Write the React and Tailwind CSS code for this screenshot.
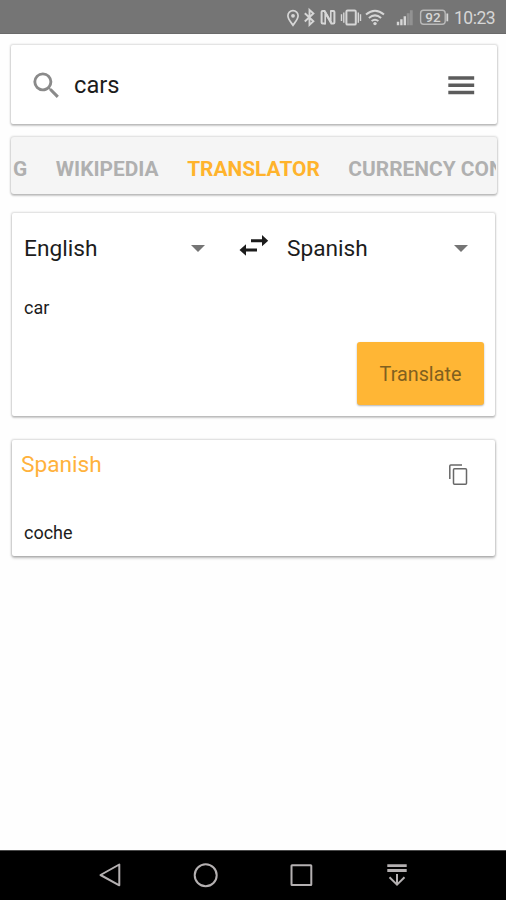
import { useState } from 'react';

const tabs = ['WIKIPEDIA', 'TRANSLATOR', 'CURRENCY CONVERTER'];

const StatusBar = () => (
  <div className="flex h-[34px] w-full items-center border-b border-[#6a6a6a] bg-[#757575] pr-[10px] pl-[286px] text-[#d6d6d6]">
    <svg className="h-[34px] w-[164px] shrink-0" viewBox="286 0 164 34" fill="none" stroke="currentColor">
      {/* location */}
      <path d="M293 25.2C291.5 22.8 287.9 19.5 287.9 15.8a5.1 5.1 0 0 1 10.2 0C298.1 19.5 294.5 22.8 293 25.2z" strokeWidth="1.7" />
      <circle cx="293" cy="15.8" r="1.9" fill="currentColor" stroke="none" />
      {/* bluetooth */}
      <path d="M304.8 13.3l8.6 8-3.9 3.6V9.9l3.9 3.6-8.6 8" strokeWidth="1.9" />
      {/* nfc */}
      <path d="M325.2 23.6h-2.6q-1 0-1-1V12.1q0-1 1-1h2l6.600 11.500" strokeWidth="2" />
      <path d="M330.800 11.100h2.600q1 0 1 1v10.500q0 1-1 1h-2l-6.600-11.500" strokeWidth="2" />
      <path d="M325.200 14v10.500M330.800 10.200v10.500" strokeWidth="1.600" />
      {/* vibrate */}
      <rect x="346.400" y="10.600" width="9.400" height="14" rx="1.200" strokeWidth="2" />
      <path d="M343.800 12.400v10.400M341.500 14.200v6.800M358.300 12.400v10.400M360.500 14.200v6.800" strokeWidth="1.400" />
      {/* wifi */}
      <path d="M366 14.600q9-7.600 18 0M368.900 17.900q6.100-5 12.200 0M371.600 21q3.400-2.600 6.800 0" strokeWidth="2" />
      <circle cx="375" cy="23.600" r="1.700" fill="currentColor" stroke="none" />
      {/* signal */}
      <path d="M398 25.300v-3.500M401.400 25.300v-6M404.800 25.300v-9" strokeWidth="2.400" />
      <path d="M408.200 25.300v-12M411.300 25.300v-15" strokeWidth="2.800" opacity="0.300" />
      {/* battery */}
      <rect x="420.600" y="10.300" width="24.600" height="14" rx="3" strokeWidth="1.400" opacity="0.700" />
      <path d="M447.300 13.500v7.800" strokeWidth="1.800" />
      <text x="433" y="22" textAnchor="middle" fontSize="13.500" fontWeight="500" fill="currentColor" stroke="none">92</text>
    </svg>
    <span className="ml-[4px] pt-[3px] text-[17.5px] tracking-[-0.5px] whitespace-nowrap">10:23</span>
  </div>
);

const SearchBar = ({ value, onChange }) => (
  <div className="flex h-[79px] items-center rounded-[2px] bg-white pt-px pr-[19px] pl-[18px] shadow-[0_0_2px_1px_rgba(0,0,0,0.14),0_2px_2px_rgba(0,0,0,0.18)]">
    <svg className="size-[35px] shrink-0" viewBox="0 0 24 24" fill="#8a8a8a">
      <path d="M15.5 14h-.79l-.28-.27A6.471 6.471 0 0 0 16 9.5 6.5 6.5 0 1 0 9.5 16c1.61 0 3.09-.59 4.23-1.57l.27.28v.79l5 4.99L20.49 19l-4.99-5zm-6 0C7.01 14 5 11.99 5 9.5S7.01 5 9.5 5 14 7.01 14 9.5 11.99 14 9.5 14z" />
    </svg>
    <input
      type="text"
      value={value}
      onChange={(e) => onChange(e.target.value)}
      className="ml-[10px] min-w-0 flex-1 pt-[2px] text-[23.7px] text-[#1c1c1c] outline-none"
    />
    <svg className="size-[34.5px] shrink-0" viewBox="0 0 24 24" fill="#5c5c5c">
      <path d="M3 18.2h18v-2.3H3v2.3zm0-5.05h18v-2.3H3v2.3zm0-7.35v2.3h18V5.8H3z" />
    </svg>
  </div>
);

const LanguageSelect = ({ label, className }) => (
  <button type="button" className={`flex items-center justify-between text-[22.7px] text-[#1c1c1c] ${className}`}>
    <span className="pt-px">{label}</span>
    <svg className="h-[7px] w-[14px]" viewBox="0 0 14 7" fill="#757575">
      <path d="M0 0h14L7 7z" />
    </svg>
  </button>
);

const NavBar = () => (
  <div className="flex h-[50px] items-center justify-center border-t border-[#4a4a4a] bg-black pl-[14px]">
    <svg className="h-[49px] w-[360px]" viewBox="80 851 360 49" fill="none" stroke="#b4b0b1" strokeWidth="2">
      <path d="M119.3 864.5v20.8L100.5 875z" strokeLinejoin="round" />
      <circle cx="205.7" cy="875.2" r="11" />
      <rect x="291.5" y="865.3" width="19.8" height="19.6" rx="0.5" />
      <path d="M387.3 865.6h19.4M387.3 870.5h19.4" strokeWidth="2.8" />
      <path d="M397 874v11M389.5 877.3l7.5 7.4 7.5-7.4" />
    </svg>
  </div>
);

const App = () => {
  const [query, setQuery] = useState('cars');
  const [text, setText] = useState('car');
  const [activeTab, setActiveTab] = useState('TRANSLATOR');

  return (
    <div className="flex h-[900px] w-[506px] flex-col overflow-hidden bg-[#fefefe] font-[Roboto,sans-serif]">
      <StatusBar />
      <main className="flex flex-1 flex-col pt-[11px]">
        <div className="mr-[9px] ml-[11px]">
          <SearchBar value={query} onChange={setQuery} />
        </div>

        <nav className="mt-[13px] mr-[9px] ml-[11px] flex h-[57px] items-center gap-[28.5px] overflow-hidden rounded-[3px] border-r border-[#f5f5f5] bg-[#f5f5f5] pt-[8px] pl-[2px] text-[20.9px] font-bold whitespace-nowrap text-[#b0b0b0] shadow-[0_0_2px_1px_rgba(0,0,0,0.14),0_2px_2px_rgba(0,0,0,0.18)]">
          <span>G</span>
          {tabs.map((tab) => (
            <button
              key={tab}
              type="button"
              onClick={() => setActiveTab(tab)}
              className={tab === activeTab ? 'text-[#ffb32c]' : ''}
            >
              {tab}
            </button>
          ))}
        </nav>

        <section className="mt-[19px] mr-[11px] ml-[12px] flex h-[203px] flex-col rounded-[2px] bg-white shadow-[0_0_2px_1px_rgba(0,0,0,0.14),0_2px_2px_rgba(0,0,0,0.18)]">
          <div className="flex h-[71px] items-center pl-[12px]">
            <LanguageSelect label="English" className="w-[181px]" />
            <svg className="mb-[8px] ml-[34px] h-[22px] w-[30px]" viewBox="0 0 30 22" fill="#1c1c1c">
              <path d="M12 5.2h11V1l6.2 5.7L23 12.3V8.2H12z" />
              <path d="M18 14.5H7v-4.2L.5 16 7 21.7v-4.2h11z" />
            </svg>
            <LanguageSelect label="Spanish" className="ml-[18px] w-[181px]" />
          </div>
          <input
            type="text"
            value={text}
            onChange={(e) => setText(e.target.value)}
            className="mx-[12px] h-[46px] text-[18px] text-[#1c1c1c] outline-none"
          />
          <button
            type="button"
            className="mt-[12px] mr-[11px] h-[63px] w-[127px] self-end rounded-[3px] bg-[#ffb635] pt-[3px] text-[19.8px] text-[#80601f] shadow-[0_1px_2px_rgba(0,0,0,0.3)]"
          >
            Translate
          </button>
        </section>

        <section className="mt-[24px] mr-[11px] ml-[12px] flex h-[116px] flex-col rounded-[2px] bg-white shadow-[0_0_2px_1px_rgba(0,0,0,0.14),0_2px_3px_rgba(0,0,0,0.25)]">
          <div className="flex justify-between pr-[27px] pl-[9px]">
            <h2 className="mt-[8px] text-[22.7px] leading-[34px] text-[#ffb23c]">Spanish</h2>
            <svg className="mt-[24px] h-[22px] w-[20px]" viewBox="0 0 20 22" fill="none" stroke="#686868" strokeWidth="1.5">
              <path d="M1.8 15V2q0-1 1-1H14" />
              <rect x="5.5" y="4.7" width="13" height="15.5" rx="1" />
            </svg>
          </div>
          <p className="mt-auto mb-[10px] pl-[12px] text-[18px] leading-[27px] text-[#1c1c1c]">coche</p>
        </section>
      </main>
      <NavBar />
    </div>
  );
};

export default App;
